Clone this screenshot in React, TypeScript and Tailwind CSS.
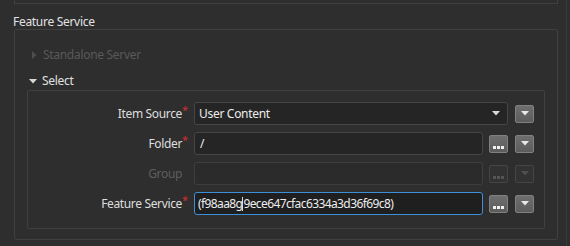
import React from 'react';

const font = { fontFamily: '"Noto Sans", "Open Sans", sans-serif' };

function Tri({ dir, color }: { dir: 'down' | 'right'; color: string }) {
  return dir === 'down' ? (
    <svg width="8" height="5" viewBox="0 0 8 5">
      <path d="M0 0h8L4 4.5z" fill={color} />
    </svg>
  ) : (
    <svg width="5" height="8" viewBox="0 0 5 8">
      <path d="M0 0v8l4.5-4z" fill={color} />
    </svg>
  );
}

function SmallBtn({ kind, disabled }: { kind: 'dots' | 'arrow'; disabled?: boolean }) {
  const dot = disabled ? 'bg-[#555]' : 'bg-[#f0f0f0]';
  return (
    <div
      className={`w-[19px] h-[18px] rounded-[2px] border flex items-center justify-center ${
        disabled ? 'border-[#454545] bg-[#323232]' : 'border-[#808080] bg-gradient-to-b from-[#6e6e6e] to-[#5c5c5c]'
      }`}
    >
      {kind === 'arrow' ? (
        <Tri dir="down" color={disabled ? '#4f4f4f' : '#e8e8e8'} />
      ) : (
        <div className="flex gap-[1px] mt-[8px]">
          <span className={`w-[3px] h-[3px] ${dot}`} />
          <span className={`w-[3px] h-[3px] ${dot}`} />
          <span className={`w-[3px] h-[3px] ${dot}`} />
        </div>
      )}
    </div>
  );
}

function Label({ text, required, disabled }: { text: string; required?: boolean; disabled?: boolean }) {
  return (
    <div className="w-[166px] shrink-0 flex justify-end pr-[6px]">
      <span className={`text-[12px] tracking-[-0.35px] ${disabled ? 'text-[#5e5e5e]' : 'text-[#dedede]'}`}>{text}</span>
      <span className={`w-[6px] text-[11px] leading-[10px] ${required ? 'text-[#d03030]' : 'text-transparent'}`}>*</span>
    </div>
  );
}

export default function App() {
  return (
    <div className="w-[570px] h-[246px] bg-[#2e2e2e] overflow-hidden flex tracking-[-0.3px]" style={font}>
      <div className="w-[567px] h-full border-r border-[#3c3c3c]">
        {/* bottom of the previous group, cut off */}
        <div className="ml-[14px] w-[544px] h-[4px] border-l border-r border-b border-[#404040]" />

        <div className="pl-[13px] pt-[10px] h-[25px] text-[12px] leading-[16px] text-[#e2e2e2]">Feature Service</div>

        <div className="ml-[14px] w-[544px] h-[211px] border border-[#404040] rounded-[2px] pl-[12px] pr-[12px] pt-[16px]">
          <div className="flex items-center h-[18px] pl-[5px] gap-[6px] text-[12px] text-[#595959]">
            <Tri dir="right" color="#4e4e4e" />
            <span>Standalone Server</span>
          </div>
          <div className="flex items-center h-[18px] mt-[8px] pl-[2px] gap-[5px] text-[12px] text-[#e0e0e0]">
            <Tri dir="down" color="#d8d8d8" />
            <span>Select</span>
          </div>

          <div className="h-[139px] border border-[#404040] rounded-[2px] pt-[11px] flex flex-col gap-[7px]">
            <div className="flex items-center h-[23px]">
              <Label text="Item Source" required />
              <div className="w-[314px] h-[23px] rounded-[3px] border border-[#464646] bg-[#252525] flex items-center justify-between pl-[4px] pr-[7px]">
                <span className="text-[12px] text-[#ececec]">User Content</span>
                <Tri dir="down" color="#d8d8d8" />
              </div>
              <div className="ml-[7px]">
                <SmallBtn kind="arrow" />
              </div>
            </div>

            <div className="flex items-center h-[23px]">
              <Label text="Folder" required />
              <div className="w-[289px] h-[23px] rounded-[3px] border border-[#464646] bg-[#252525] flex items-center pl-[5px]">
                <span className="text-[12px] text-[#ececec]">/</span>
              </div>
              <div className="ml-[6px] flex gap-[7px]">
                <SmallBtn kind="dots" />
                <SmallBtn kind="arrow" />
              </div>
            </div>

            <div className="flex items-center h-[23px]">
              <Label text="Group" disabled />
              <div className="w-[289px] h-[23px] rounded-[3px] border border-[#3e3e3e] bg-[#2b2b2b]" />
              <div className="ml-[6px] flex gap-[7px]">
                <SmallBtn kind="dots" disabled />
                <SmallBtn kind="arrow" disabled />
              </div>
            </div>

            <div className="flex items-center h-[23px]">
              <Label text="Feature Service" required />
              <div className="w-[289px] h-[23px] rounded-[3px] border border-[#3d8fd8] bg-[#1f1f1f] flex items-center pl-[3px] tracking-[-0.6px]">
                <span className="text-[12px] text-[#ececec]">(f98aa8g</span>
                <span className="w-[1px] h-[14px] bg-[#dcdcdc]" />
                <span className="text-[12px] text-[#ececec]">9ece647cfac6334a3d36f69c8)</span>
              </div>
              <div className="ml-[6px] flex gap-[7px]">
                <SmallBtn kind="dots" />
                <SmallBtn kind="arrow" />
              </div>
            </div>
          </div>
        </div>
      </div>
    </div>
  );
}
